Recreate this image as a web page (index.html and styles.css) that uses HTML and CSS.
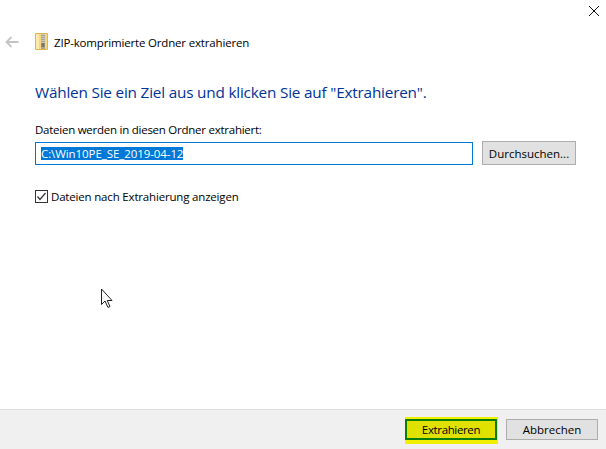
FILE: index.html
```html
<!DOCTYPE html>
<html lang="de">
<head>
<meta charset="utf-8">
<title>ZIP-komprimierte Ordner extrahieren</title>
<link rel="stylesheet" href="styles.css">
</head>
<body>
<div class="dialog">
  <div class="closebar">
    <svg class="close" width="10" height="10" viewBox="0 0 10 10"><path d="M0 0L10 10M10 0L0 10" stroke="#111" stroke-width="1" fill="none"/></svg>
  </div>
  <div class="titlebar">
    <svg class="back" width="14" height="12" viewBox="0 0 14 12"><path d="M6.500 1L1.500 6L6.500 11M1.500 6H13.500" stroke="#c4c4c4" stroke-width="1.800" fill="none"/></svg>
    <svg class="zip" width="13" height="17" viewBox="0 0 13 17">
      <path d="M.5 .5H12.500V16.500H.5Z" fill="#f6d77c" stroke="#dcb64f"/>
      <rect x="1" y="1" width="3" height="15" fill="#fbe9ae"/>
      <rect x="6" y="1" width="4" height="15" fill="#a9a594"/>
      <path d="M7 1V11M9 1V11" stroke="#e8e8e4" stroke-width="1" stroke-dasharray="1 1"/>
      <rect x="6.500" y="10" width="3" height="4" fill="#77776f"/>
    </svg>
    <span class="title">ZIP-komprimierte Ordner extrahieren</span>
  </div>
  <main class="content">
    <h1 class="heading">Wählen Sie ein Ziel aus und klicken Sie auf "Extrahieren".</h1>
    <div class="label">Dateien werden in diesen Ordner extrahiert:</div>
    <div class="pathrow">
      <div class="pathbox"><span class="selected">C:\Win10PE_SE_2019-04-12</span></div>
      <div class="btn browse">Durchsuchen...</div>
    </div>
    <div class="checkrow">
      <svg class="check" width="13" height="13" viewBox="0 0 13 13"><rect x=".5" y=".5" width="12" height="12" fill="#fff" stroke="#333"/><path d="M2.500 6.500L5 9.500L10.500 3" stroke="#333" stroke-width="1.200" fill="none"/></svg>
      <span class="checklabel">Dateien nach Extrahierung anzeigen</span>
    </div>
  </main>
  <svg class="cursor" width="13" height="21" viewBox="0 0 13 21"><path d="M1.500 1V16.500L5 13L8 19.500L10 18.500L7.200 12.500H12Z" fill="#fff" stroke="#222" stroke-width="1"/></svg>
  <footer class="footer">
    <div class="highlight"><div class="btn primary"><span class="primary-text">Extrahieren</span></div></div>
    <div class="btn cancel">Abbrechen</div>
  </footer>
</div>
</body>
</html>
```
FILE: styles.css
```css
html, body {
  margin: 0;
  padding: 0;
  background: #fff;
}
.dialog {
  position: relative;
  width: 606px;
  height: 449px;
  display: flex;
  flex-direction: column;
  font-family: "Open Sans", "Noto Sans", sans-serif;
  font-size: 11.5px;
  color: #000;
  overflow: hidden;
}
.closebar {
  height: 27px;
  display: flex;
  justify-content: flex-end;
  align-items: flex-start;
  box-sizing: border-box;
  padding: 6px 7px 0 0;
}
.titlebar {
  height: 30px;
  display: flex;
  align-items: center;
  padding-left: 5px;
}
.back { margin-right: 16px; }
.zip { margin-right: 6px; margin-top: -2px; }
.title {
  font-size: 11.5px;
  letter-spacing: -0.17px;
}
.content {
  flex: 1;
  padding: 0 30px 0 35px;
  display: flex;
  flex-direction: column;
}
.heading {
  margin: 23px 0 0;
  height: 24px;
  font-size: 15.3px;
  line-height: 24px;
  font-weight: 400;
  color: #003399;
  letter-spacing: -0.19px;
}
.label {
  margin-top: 17px;
  height: 17px;
  line-height: 17px;
  letter-spacing: -0.25px;
}
.pathrow {
  margin-top: 3px;
  display: flex;
  align-items: flex-start;
  gap: 9px;
}
.pathbox {
  width: 438px;
  height: 23px;
  margin-top: 1px;
  box-sizing: border-box;
  border: 1px solid #0078d7;
  padding: 4px 0 0 5px;
  display: flex;
  align-items: flex-start;
}
.selected {
  background: #0078d7;
  color: #fff;
  height: 13px;
  line-height: 13px;
  letter-spacing: -0.08px;
}
.btn {
  box-sizing: border-box;
  background: #e1e1e1;
  border: 1px solid #adadad;
  display: flex;
  align-items: center;
  justify-content: center;
}
.browse {
  width: 94px;
  height: 24px;
}
.checkrow {
  margin-top: 24px;
  display: flex;
  align-items: center;
  gap: 3px;
  height: 15px;
}
.checklabel { letter-spacing: -0.18px; }
.check { flex: none; }
.cursor {
  position: absolute;
  left: 100px;
  top: 288px;
}
.footer {
  height: 40px;
  box-sizing: border-box;
  background: #f0f0f0;
  border-top: 1px solid #dfdfdf;
  display: flex;
  align-items: flex-start;
  padding: 7px 8px 0 405px;
  gap: 8px;
}
.highlight {
  width: 93px;
  height: 27px;
  box-sizing: border-box;
  background: #f2f000;
  padding-top: 2px;
}
.primary {
  width: 92px;
  height: 21px;
  background: #e1e100;
  border: 2px solid #0a7d0a;
}
.primary-text { letter-spacing: -0.36px; }
.cancel {
  width: 92px;
  height: 21px;
  margin-top: 2px;
}
```
